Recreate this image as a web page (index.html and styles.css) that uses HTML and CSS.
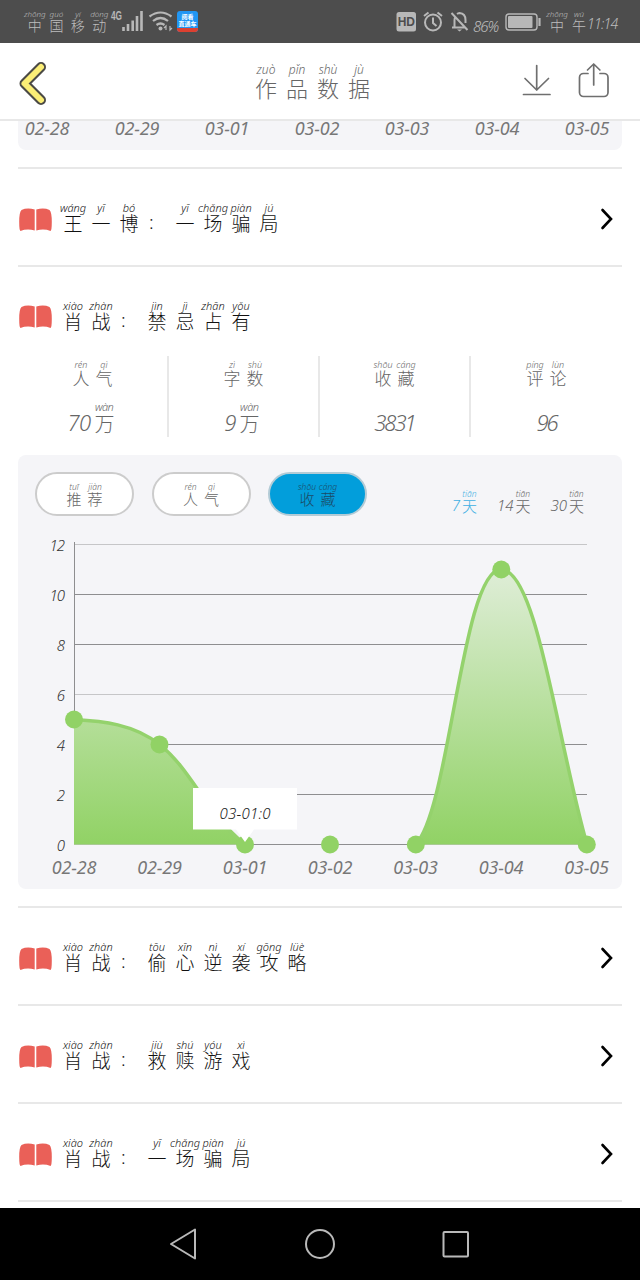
FILE: index.html
```
<!DOCTYPE html>
<html lang="zh-CN">
<head>
    <meta charset="UTF-8">
    <meta name="viewport" content="width=device-width, initial-scale=1.0">
    <title>作品数据</title>
    <link rel="stylesheet" href="styles.css">
</head>
<body>
    <!-- status bar -->
    <div class="status-bar">
        <div class="carrier"><ruby>中<rt>zhōng</rt></ruby><ruby>国<rt>guó</rt></ruby><ruby>移<rt>yí</rt></ruby><ruby>动<rt>dòng</rt></ruby></div>
        <svg class="status-left" width="90" height="26" viewBox="110 8 90 26">
            <text class="net" x="111" y="20" textLength="11" lengthAdjust="spacingAndGlyphs">4G</text>
            <path d="M123.500 31v-4M128 31v-7M132.700 31V20.500M137 31V16M141.500 31V11" stroke="#b8b8b8" stroke-width="2.600" fill="none"/>
            <path d="M149.500 16.500q11-8 22 0M153 21q7.500-6 15 0M156.500 25q4-3 8 0" stroke="#b8b8b8" stroke-width="2.200" fill="none"/>
            <circle cx="160.500" cy="28.500" r="2" fill="#b8b8b8"/>
            <path d="M166 30v-4l-2 2M170 26v4l2-2" stroke="#b8b8b8" stroke-width="1.200" fill="none"/>
            <rect x="177" y="11" width="21" height="21" rx="3" fill="#2196f3"/>
            <path d="M177 28h21v1a3 3 0 0 1-3 3h-15a3 3 0 0 1-3-3z" fill="#dc4030"/>
            <text class="app-text" x="187.500" y="18.500">阅看</text>
            <text class="app-text" x="187.500" y="26">直通车</text>
        </svg>
        <svg class="status-right" width="84" height="26" viewBox="394 8 84 26">
            <rect x="396.500" y="12" width="19.500" height="19.500" rx="2.500" fill="#b8b8b8"/>
            <text class="hd" x="406.300" y="26">HD</text>
            <g fill="none" stroke="#b8b8b8" stroke-width="2">
                <circle cx="433" cy="22.500" r="8"/>
                <path d="M433 17.500v5.500l3.500 3M424 16l4.500-3.500M442 16l-4.500-3.500"/>
                <path d="M451.500 13l16 17M452 27.500h12.500M454.500 27v-7q0-2 1-3.500M457 14q1-.7 2.500-1 6 .5 6 7v3"/>
            </g>
            <path d="M457 29.500h5l-2.500 2z" fill="#b8b8b8"/>
        </svg>
        <span class="percent">86%</span>
        <svg class="battery" width="37" height="18" viewBox="0 0 37 18">
            <rect x="1" y="1" width="31" height="16" rx="3" fill="none" stroke="#b8b8b8" stroke-width="1.400"/>
            <rect x="3" y="3" width="24.500" height="12" rx="1" fill="#b8b8b8"/>
            <path d="M34.500 5v8" stroke="#b8b8b8" stroke-width="2.200"/>
        </svg>
        <div class="clock"><ruby>中<rt>zhōng</rt></ruby><ruby>午<rt>wǔ</rt></ruby><span>11:14</span></div>
    </div>

    <!-- header -->
    <div class="header">
        <svg class="back" width="30" height="46" viewBox="18 60 30 46">
            <path d="M41 67L24.500 83.500 41 100" fill="none" stroke="#4b4a45" stroke-width="10" stroke-linecap="round" stroke-linejoin="round"/>
            <path d="M41 67L24.500 83.500 41 100" fill="none" stroke="#fbee76" stroke-width="6" stroke-linecap="round" stroke-linejoin="round"/>
        </svg>
        <div class="title"><ruby>作<rt>zuò</rt></ruby><ruby>品<rt>pǐn</rt></ruby><ruby>数<rt>shù</rt></ruby><ruby>据<rt>jù</rt></ruby></div>
        <svg class="actions" width="90" height="40" viewBox="521 62 90 40">
            <g fill="none" stroke="#6f6f6f" stroke-width="1.700" stroke-linecap="round" stroke-linejoin="round">
                <path d="M536.700 66.500v24.500M525 79.500L536.700 91l11.800-11.500M523.500 95.500h26.500"/>
                <path d="M588 74.500h-4.500a4 4 0 0 0-4 4v15a4 4 0 0 0 4 4h20.500a4 4 0 0 0 4-4v-15a4 4 0 0 0-4-4h-4M593.700 86V65M587.500 71l6.200-6 6.200 6"/>
            </g>
        </svg>
    </div>

    <div class="content">
        <div class="dates">
            <span>02-28</span><span>02-29</span><span>03-01</span><span>03-02</span><span>03-03</span><span>03-04</span><span>03-05</span>
        </div>

        <div class="book">
            <svg class="book-icon" width="34" height="24" viewBox="0 0 34 24"><path d="M2.500 2Q8-.5 15.700 1.500v21Q8 20.500 1.500 23 .2 22.500.2 14 .2 4 2.500 2zM17.300 1.500Q25-.5 30.500 2q2.300 2 2.300 12 0 8.500-1.300 9-6.500-2.500-14.200-.5z" fill="#ea6058"/></svg>
            <div class="name"><ruby>王<rt>wáng</rt></ruby><ruby>一<rt>yī</rt></ruby><ruby>博<rt>bó</rt></ruby><span class="colon">:</span><ruby>一<rt>yī</rt></ruby><ruby>场<rt>chǎng</rt></ruby><ruby>骗<rt>piàn</rt></ruby><ruby>局<rt>jú</rt></ruby></div>
            <svg class="arrow" width="14" height="22" viewBox="0 0 14 22"><path d="M2.500 2L11 11l-8.500 9"/></svg>
        </div>

        <div class="book open">
            <svg class="book-icon" width="34" height="24" viewBox="0 0 34 24"><path d="M2.500 2Q8-.5 15.700 1.500v21Q8 20.500 1.500 23 .2 22.500.2 14 .2 4 2.500 2zM17.300 1.500Q25-.5 30.500 2q2.300 2 2.300 12 0 8.500-1.300 9-6.500-2.500-14.200-.5z" fill="#ea6058"/></svg>
            <div class="name"><ruby>肖<rt>xiào</rt></ruby><ruby>战<rt>zhàn</rt></ruby><span class="colon">:</span><ruby>禁<rt>jìn</rt></ruby><ruby>忌<rt>jì</rt></ruby><ruby>占<rt>zhān</rt></ruby><ruby>有<rt>yǒu</rt></ruby></div>
        </div>

        <div class="stats">
            <div class="stat">
                <div class="label"><ruby>人<rt>rén</rt></ruby><ruby>气<rt>qì</rt></ruby></div>
                <div class="value">70<ruby>万<rt>wàn</rt></ruby></div>
            </div>
            <div class="stat">
                <div class="label"><ruby>字<rt>zì</rt></ruby><ruby>数<rt>shù</rt></ruby></div>
                <div class="value">9<ruby>万<rt>wàn</rt></ruby></div>
            </div>
            <div class="stat">
                <div class="label"><ruby>收<rt>shōu</rt></ruby><ruby>藏<rt>cáng</rt></ruby></div>
                <div class="value">3831</div>
            </div>
            <div class="stat">
                <div class="label"><ruby>评<rt>píng</rt></ruby><ruby>论<rt>lùn</rt></ruby></div>
                <div class="value">96</div>
            </div>
        </div>

        <div class="panel">
            <div class="filters">
                <div class="pill"><ruby>推<rt>tuī</rt></ruby><ruby>荐<rt>jiàn</rt></ruby></div>
                <div class="pill"><ruby>人<rt>rén</rt></ruby><ruby>气<rt>qì</rt></ruby></div>
                <div class="pill active"><ruby>收<rt>shōu</rt></ruby><ruby>藏<rt>cáng</rt></ruby></div>
                <div class="ranges">
                    <div class="range active">7<ruby>天<rt>tiān</rt></ruby></div>
                    <div class="range">14<ruby>天<rt>tiān</rt></ruby></div>
                    <div class="range">30<ruby>天<rt>tiān</rt></ruby></div>
                </div>
            </div>
            <svg class="chart" width="604" height="373" viewBox="18 516 604 373">
                <defs>
                    <linearGradient id="area" gradientUnits="userSpaceOnUse" x1="0" y1="569" x2="0" y2="844">
                        <stop offset="0" stop-color="#91d265" stop-opacity=".22"/>
                        <stop offset="1" stop-color="#91d265"/>
                    </linearGradient>
                </defs>
                <g class="grid">
                    <path d="M74 544.500h513M74 694.500h513" stroke="#c6c6c8"/>
                    <path d="M74 594.500h513M74 644.500h513M74 744.500h513M74 794.500h513M74 844.500h513M74.500 542v302" stroke="#8e8e90"/>
                </g>
                <g class="y-axis">
                    <text x="64" y="551">12</text>
                    <text x="64" y="601">10</text>
                    <text x="64" y="651">8</text>
                    <text x="64" y="701">6</text>
                    <text x="64" y="751">4</text>
                    <text x="64" y="801">2</text>
                    <text x="64" y="851">0</text>
                </g>
                <!-- opaque base so the grid doesn't show through the area -->
                <g fill="#f5f5f8">
                    <path d="M74 719.500C102 721 134 724 159.500 744.500 192 770 205 812 245 844.500H74z"/>
                    <path d="M415.500 844.500C450 810 462 569.500 501 569.500 537 569.500 557 740 587 844.500z"/>
                </g>
                <g fill="url(#area)">
                    <path d="M74 719.500C102 721 134 724 159.500 744.500 192 770 205 812 245 844.500H74z"/>
                    <path d="M415.500 844.500C450 810 462 569.500 501 569.500 537 569.500 557 740 587 844.500z"/>
                </g>
                <g fill="none" stroke="#94d26c" stroke-width="3.500">
                    <path d="M74 719.500C102 721 134 724 159.500 744.500 192 770 205 812 245 844.500"/>
                    <path d="M415.500 844.500C450 810 462 569.500 501 569.500 537 569.500 557 740 587 844.500"/>
                </g>
                <g fill="#91d265">
                    <circle cx="74" cy="719.500" r="9"/>
                    <circle cx="159.500" cy="744.500" r="9"/>
                    <circle cx="245" cy="844.500" r="9"/>
                    <circle cx="330" cy="844.500" r="9"/>
                    <circle cx="415.800" cy="844.500" r="9"/>
                    <circle cx="501.300" cy="569.500" r="9"/>
                    <circle cx="586.800" cy="844.500" r="9"/>
                </g>
                <path d="M193 788h104v41.500h-43l-9 12.500-9-12.500h-43z" fill="#fff"/>
                <text class="tip" x="245" y="819" textLength="51">03-01:0</text>
                <g class="x-axis">
                    <text x="74" y="873.500">02-28</text>
                    <text x="159.500" y="873.500">02-29</text>
                    <text x="245" y="873.500">03-01</text>
                    <text x="330" y="873.500">03-02</text>
                    <text x="415.500" y="873.500">03-03</text>
                    <text x="501" y="873.500">03-04</text>
                    <text x="586.500" y="873.500">03-05</text>
                </g>
            </svg>
        </div>

        <div class="book">
            <svg class="book-icon" width="34" height="24" viewBox="0 0 34 24"><path d="M2.500 2Q8-.5 15.700 1.500v21Q8 20.500 1.500 23 .2 22.500.2 14 .2 4 2.500 2zM17.300 1.500Q25-.5 30.500 2q2.300 2 2.300 12 0 8.500-1.300 9-6.500-2.500-14.200-.5z" fill="#ea6058"/></svg>
            <div class="name"><ruby>肖<rt>xiào</rt></ruby><ruby>战<rt>zhàn</rt></ruby><span class="colon">:</span><ruby>偷<rt>tōu</rt></ruby><ruby>心<rt>xīn</rt></ruby><ruby>逆<rt>nì</rt></ruby><ruby>袭<rt>xí</rt></ruby><ruby>攻<rt>gōng</rt></ruby><ruby>略<rt>lüè</rt></ruby></div>
            <svg class="arrow" width="14" height="22" viewBox="0 0 14 22"><path d="M2.500 2L11 11l-8.500 9"/></svg>
        </div>
        <div class="book">
            <svg class="book-icon" width="34" height="24" viewBox="0 0 34 24"><path d="M2.500 2Q8-.5 15.700 1.500v21Q8 20.500 1.500 23 .2 22.500.2 14 .2 4 2.500 2zM17.300 1.500Q25-.5 30.500 2q2.300 2 2.300 12 0 8.500-1.300 9-6.500-2.500-14.200-.5z" fill="#ea6058"/></svg>
            <div class="name"><ruby>肖<rt>xiào</rt></ruby><ruby>战<rt>zhàn</rt></ruby><span class="colon">:</span><ruby>救<rt>jiù</rt></ruby><ruby>赎<rt>shú</rt></ruby><ruby>游<rt>yóu</rt></ruby><ruby>戏<rt>xì</rt></ruby></div>
            <svg class="arrow" width="14" height="22" viewBox="0 0 14 22"><path d="M2.500 2L11 11l-8.500 9"/></svg>
        </div>
        <div class="book">
            <svg class="book-icon" width="34" height="24" viewBox="0 0 34 24"><path d="M2.500 2Q8-.5 15.700 1.500v21Q8 20.500 1.500 23 .2 22.500.2 14 .2 4 2.500 2zM17.300 1.500Q25-.5 30.500 2q2.300 2 2.300 12 0 8.500-1.300 9-6.500-2.500-14.200-.5z" fill="#ea6058"/></svg>
            <div class="name"><ruby>肖<rt>xiào</rt></ruby><ruby>战<rt>zhàn</rt></ruby><span class="colon">:</span><ruby>一<rt>yī</rt></ruby><ruby>场<rt>chǎng</rt></ruby><ruby>骗<rt>piàn</rt></ruby><ruby>局<rt>jú</rt></ruby></div>
            <svg class="arrow" width="14" height="22" viewBox="0 0 14 22"><path d="M2.500 2L11 11l-8.500 9"/></svg>
        </div>
        <div class="list-end"></div>
    </div>

    <!-- navigation keys -->
    <div class="nav">
        <svg width="640" height="72" viewBox="0 1208 640 72">
            <g fill="none" stroke="#b9b9b9" stroke-width="2" stroke-linejoin="round">
                <path d="M171 1244l24-14.500v29z"/>
                <circle cx="320" cy="1244" r="14"/>
                <rect x="443.500" y="1232" width="24.500" height="24.500" rx="1"/>
            </g>
        </svg>
    </div>
</body>
</html>
```

FILE: styles.css
```
* {
    box-sizing: border-box;
}

body {
    margin: 0;
    width: 640px;
    height: 1280px;
    overflow: hidden;
    display: flex;
    flex-direction: column;
    font-family: 'Noto Sans', 'Noto Sans CJK SC', sans-serif;
    font-weight: 300;
    background-color: #fff;
}

svg {
    display: block;
    flex: none;
}

/* character with its pinyin on top */
ruby {
    display: inline-flex;
    flex-direction: column-reverse;
    align-items: center;
    width: 28px;
    font-family: 'Noto Sans CJK SC', sans-serif;
}

rt {
    display: block;
    font-family: 'Noto Sans', sans-serif;
    font-style: italic;
    font-size: 11px;
    line-height: 13px;
    white-space: nowrap;
}

/* status bar */
.status-bar {
    flex: none;
    display: flex;
    align-items: flex-start;
    height: 43px;
    padding: 9px 0 0 24px;
    background-color: #4d4d4d;
    color: #bdbdbd;
    font-size: 14px;
}

.status-bar svg {
    margin-top: -1px;
}

.status-bar ruby {
    width: 22px;
    line-height: 14px;
}

.status-bar rt {
    font-size: 8px;
    line-height: 9px;
}

.carrier {
    display: flex;
    width: 86px;
}

.net {
    font: bold 12px 'Liberation Sans', sans-serif;
    fill: #b8b8b8;
}

.app-text {
    font: bold 6px 'Noto Sans CJK SC', sans-serif;
    fill: #fff;
    text-anchor: middle;
}

.hd {
    font: bold 12px 'Liberation Sans', sans-serif;
    fill: #4d4d4d;
    text-anchor: middle;
}

.status-right {
    margin-left: 194px;
}

.percent {
    margin-left: -5px;
    width: 33px;
    padding-top: 7px;
    font-style: italic;
    font-size: 15px;
    line-height: 20px;
    letter-spacing: -1px;
}

.status-bar .battery {
    margin-top: 4px;
    margin-left: -1px;
}

.clock {
    display: flex;
    align-items: flex-end;
    margin-left: 4px;
}

.clock span {
    margin-left: -3px;
    font-style: italic;
    font-size: 14px;
    line-height: 17px;
    letter-spacing: -0.7px;
}

/* header */
.header {
    flex: none;
    display: flex;
    align-items: center;
    justify-content: space-between;
    height: 78px;
    padding: 0 29px 0 18px;
    border-bottom: 2px solid #e8e8e8;
    color: #666;
}

.back {
    margin-right: 56px;
    margin-top: 3px;
}

.title {
    display: flex;
    margin-top: -1px;
    font-size: 22px;
}

.title ruby {
    width: 31px;
    line-height: 22px;
}

.title rt {
    font-size: 12px;
}

/* content */
.content {
    flex: 1;
    padding: 0 18px;
}

.dates {
    display: flex;
    justify-content: space-between;
    height: 29px;
    margin-bottom: 17px;
    padding: 0 12px 0 6px;
    border-radius: 0 0 8px 8px;
    background-color: #f5f5f8;
    color: #777;
    font-size: 18px;
    font-style: italic;
    font-weight: 400;
    line-height: 15px;
}

.dates span {
    width: 46px;
    text-align: center;
    letter-spacing: -0.2px;
}

.book {
    display: flex;
    align-items: center;
    height: 98px;
    border-top: 2px solid #e8e8e8;
    color: #111;
}

.book-icon {
    margin-left: 1px;
    margin-top: 5px;
}

.name {
    display: flex;
    align-items: flex-end;
    flex: 1;
    margin-left: 6px;
    margin-top: -1px;
    font-size: 19px;
}

.name ruby {
    line-height: 18px;
}

.colon {
    width: 28px;
    padding-left: 6px;
    line-height: 20px;
}

.arrow {
    margin: 3px 8px 0 0;
    fill: none;
    stroke: #000;
    stroke-width: 2.6;
    stroke-linecap: round;
}

.open {
    height: 91px;
    align-items: flex-start;
}

.open .book-icon {
    margin-top: 38px;
}

.open .name {
    margin-top: 32px;
}

/* numbers */
.stats {
    display: flex;
    height: 81px;
    color: #666;
}

.stat {
    display: flex;
    flex-direction: column;
    align-items: center;
    width: 151.5px;
    padding-top: 4px;
    border-right: 2px solid #e8e8e8;
}

.stat:last-child {
    border-right: 0;
}

.label {
    display: flex;
    font-size: 17px;
}

.label ruby {
    width: 23px;
    line-height: 15px;
}

.label rt {
    font-size: 9px;
    line-height: 10px;
}

.value {
    display: flex;
    align-items: flex-end;
    height: 38px;
    margin-top: 13px;
    font-size: 22px;
    font-style: italic;
    line-height: 28px;
    letter-spacing: -0.5px;
}

.stat:nth-child(n+3) .value {
    letter-spacing: -2px;
}

.value ruby {
    width: 27px;
    font-size: 20px;
    font-style: normal;
    line-height: 24px;
}

.value rt {
    line-height: 10px;
}

/* chart */
.panel {
    height: 434px;
    margin: 18px 0 17px;
    border-radius: 8px;
    background-color: #f5f5f8;
}

.filters {
    display: flex;
    height: 61px;
    padding: 17px 36px 0 17px;
    color: #666;
}

.pill {
    display: flex;
    justify-content: center;
    align-items: center;
    width: 99px;
    height: 44px;
    margin-right: 17.5px;
    border: 2px solid #ccc;
    border-radius: 22px;
    background-color: #fff;
    font-size: 15px;
}

.pill ruby {
    width: 21px;
    line-height: 15px;
}

.pill rt {
    font-size: 8.5px;
    line-height: 9px;
}

.pill.active {
    border-color: #b3cbd6;
    background-color: #029edb;
    color: #1c4a66;
}

.ranges {
    display: flex;
    gap: 18px;
    margin-left: auto;
    padding-top: 16px;
}

.range {
    display: flex;
    align-items: flex-end;
    height: 26px;
    font-size: 15px;
    font-style: italic;
    line-height: 18px;
}

.range ruby {
    width: 19px;
    font-style: normal;
    line-height: 16px;
}

.range rt {
    font-size: 8.5px;
    line-height: 9px;
}

.range.active {
    color: #3fb0e3;
}

.chart text {
    font-style: italic;
}

.y-axis text {
    font-size: 15px;
    letter-spacing: -1px;
    text-anchor: end;
    fill: #333;
}

.x-axis text {
    font-size: 18px;
    font-weight: 400;
    letter-spacing: -0.2px;
    text-anchor: middle;
    fill: #777;
}

.tip {
    font-size: 15px;
    text-anchor: middle;
    fill: #222;
}

.list-end {
    height: 2px;
    background-color: #e8e8e8;
}

/* navigation keys */
.nav {
    flex: none;
    height: 72px;
    background-color: #000;
}
```
